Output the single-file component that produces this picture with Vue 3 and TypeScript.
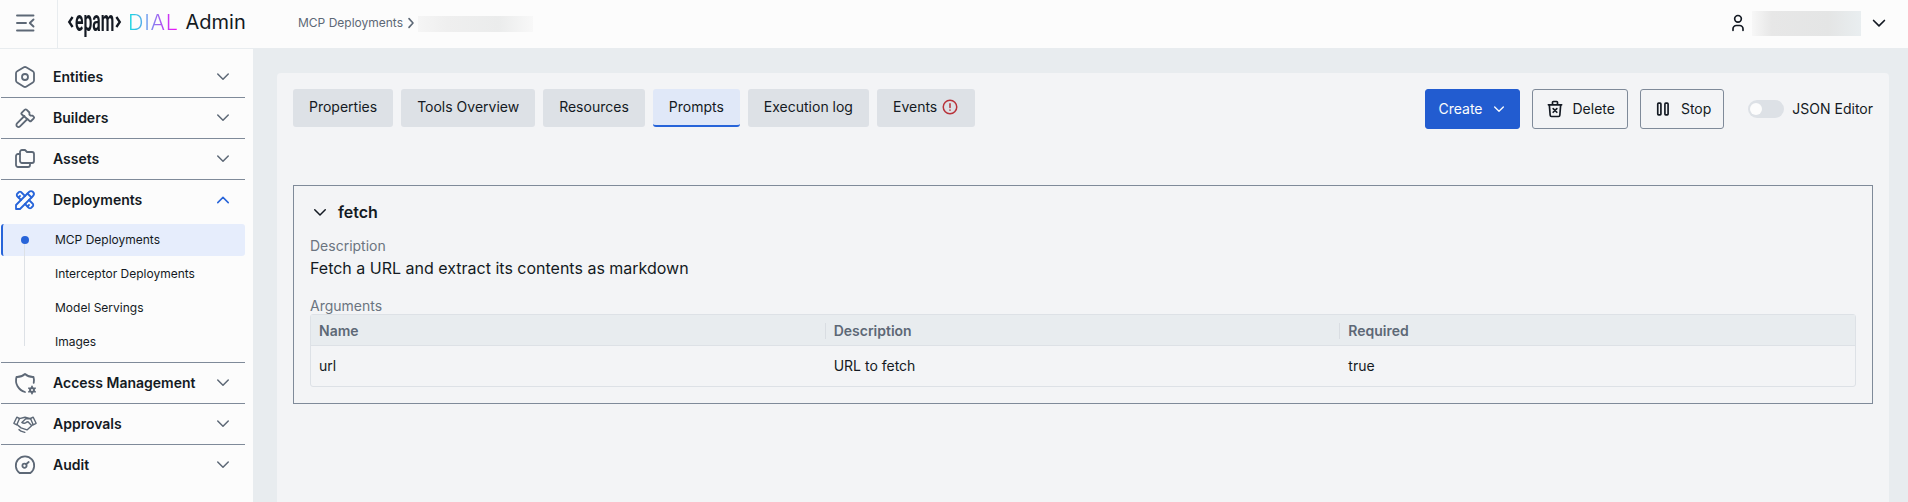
<script setup lang="ts">
interface NavItem {
  label: string
  icon: string[]
  open?: boolean
  children?: string[]
}

const nav: NavItem[] = [
  {
    label: 'Entities',
    icon: [
      'M19.875 6.27a2.225 2.225 0 0 1 1.125 1.948v7.284c0 .809 -.443 1.555 -1.158 1.948l-6.75 4.27a2.269 2.269 0 0 1 -2.184 0l-6.75 -4.27a2.225 2.225 0 0 1 -1.158 -1.948v-7.285c0 -.809 .443 -1.554 1.158 -1.947l6.75 -3.98a2.33 2.33 0 0 1 2.25 0l6.75 3.98z',
      'M12 9a3 3 0 1 0 0 6a3 3 0 1 0 0 -6',
    ],
  },
  {
    label: 'Builders',
    icon: [
      'M11.414 10l-7.383 7.418a2.091 2.091 0 0 0 0 2.967a2.11 2.11 0 0 0 2.976 0l7.407 -7.385',
      'M8.6 6.9l3 -3a1.6 1.6 0 0 1 2.2 0l2.6 2.6v2l1.2 1.2h2l1.2 1.2a1 1 0 0 1 0 1.4l-2.7 2.7a1 1 0 0 1 -1.4 0l-8.1 -6.7a1 1 0 0 1 0 -1.4z',
    ],
  },
  {
    label: 'Assets',
    icon: [
      'M9 3h3l2 2h5a2 2 0 0 1 2 2v7a2 2 0 0 1 -2 2h-10a2 2 0 0 1 -2 -2v-9a2 2 0 0 1 2 -2',
      'M17 16v2a2 2 0 0 1 -2 2h-10a2 2 0 0 1 -2 -2v-9a2 2 0 0 1 2 -2h2',
    ],
  },
  {
    label: 'Deployments',
    open: true,
    icon: [
      'M3 21h4l13 -13a1.5 1.5 0 0 0 -4 -4l-13 13v4',
      'M14.5 5.5l4 4',
      'M12 8l-4 -4a2 2 0 0 0 -2 0l-2 2a2 2 0 0 0 0 2l4 4',
      'M7 8l-1.5 1.5',
      'M16 12l4 4a2 2 0 0 1 0 2l-2 2a2 2 0 0 1 -2 0l-4 -4',
      'M16 17l-1.5 1.5',
    ],
    children: ['MCP Deployments', 'Interceptor Deployments', 'Model Servings', 'Images'],
  },
  {
    label: 'Access Management',
    icon: [
      'M12 21a12 12 0 0 1 -8.5 -15a12 12 0 0 0 8.5 -3a12 12 0 0 0 8.5 3c.568 1.933 .635 3.957 .223 5.89',
      'M19 17a2 2 0 1 0 0 4a2 2 0 1 0 0 -4',
      'M19 15.5v1.5M19 21v1.5M22.03 17.25l-1.3 .75M17.27 20l-1.3 .75M15.97 17.25l1.3 .75M20.73 20l1.3 .75',
    ],
  },
  {
    label: 'Approvals',
    icon: [
      'M3.8 5.2l2.7 1.3l-2.7 6.3l-2.9 -1.5z',
      'M20.2 5.2l-2.7 1.3l2.7 6.3l2.9 -1.5z',
      'M6.4 6.6l5.6 -1.4l5.6 1.4',
      'M4 12.5l4 3.4l6 2l6 -5.4',
      'M17.3 6.8h-4.5l-4 3.6c1.5 1.3 3.7 1.1 5 -.4l1.2 -.2l3.3 3.5',
      'M6 17.6l2 1.6l3.8 1.2',
    ],
  },
  {
    label: 'Audit',
    icon: [
      'M6.6 20a9.2 9.2 0 1 1 10.8 0z',
      'M11.5 10.6a2.1 2.1 0 1 0 0 4.2a2.1 2.1 0 1 0 0 -4.2',
      'M13.1 11.2l2.6 -2.2',
    ],
  },
]

const tabs = ['Properties', 'Tools Overview', 'Resources', 'Prompts', 'Execution log', 'Events']
const activeTab = 'Prompts'
const columns = ['Name', 'Description', 'Required']
const rows = [['url', 'URL to fetch', 'true']]
</script>

<template>
  <div class="app">
    <header class="header">
      <div class="burger">
        <svg width="24" height="24" viewBox="0 0 24 24" class="ico thick">
          <path d="M4 4.5h16.5M4 12h9M4 19.5h16.5M20.5 8.5l-3.7 3.5l3.7 3.5" />
        </svg>
      </div>
      <div class="brand">
        <svg class="bracket" width="7" height="14" viewBox="0 0 7 14"><path d="M5.6 2L2.2 7l3.4 5" /></svg>
        <span class="epam"><span class="epam-text">epam</span></span>
        <svg class="bracket" width="7" height="14" viewBox="0 0 7 14"><path d="M1.4 2L4.8 7l-3.4 5" /></svg>
        <span class="dial">DIAL</span>
        <span class="admin">Admin</span>
      </div>
      <div class="crumbs">
        <span>MCP Deployments</span>
        <svg width="16" height="16" viewBox="0 0 24 24" class="ico crumb-arrow"><path d="M9 5.5l6 6.5l-6 6.5" /></svg>
        <span class="redacted name"></span>
      </div>
      <div class="user">
        <svg width="20" height="20" viewBox="0 0 24 24" class="ico dark">
          <path d="M8 7a4 4 0 1 0 8 0a4 4 0 0 0 -8 0M6 21v-2a4 4 0 0 1 4 -4h4a4 4 0 0 1 4 4v2" />
        </svg>
        <span class="redacted account"></span>
        <svg width="20" height="20" viewBox="0 0 24 24" class="ico dark"><path d="M5.5 9l6.5 6.5l6.5 -6.5" /></svg>
      </div>
    </header>

    <div class="body">
      <nav class="sidebar">
        <section v-for="item in nav" :key="item.label" class="group" :class="{ open: item.open }">
          <div class="group-head">
            <svg width="24" height="24" viewBox="0 0 24 24" class="ico nav-ico" :class="{ fine: item.label === 'Approvals' }">
              <path v-for="d in item.icon" :key="d" :d="d" />
            </svg>
            <span class="group-label">{{ item.label }}</span>
            <svg width="18" height="18" viewBox="0 0 24 24" class="ico chevron">
              <path :d="item.open ? 'M5 15.5l7 -7l7 7' : 'M5 8l7 7l7 -7'" />
            </svg>
          </div>
          <ul v-if="item.children" class="children">
            <li v-for="(child, i) in item.children" :key="child" :class="{ current: i === 0 }">{{ child }}</li>
          </ul>
        </section>
      </nav>

      <main class="panel">
        <div class="toolbar">
          <div class="tabs">
            <button v-for="tab in tabs" :key="tab" class="tab" :class="{ active: tab === activeTab }">
              {{ tab }}
              <svg v-if="tab === 'Events'" width="18" height="18" viewBox="0 0 24 24" class="ico alert">
                <path d="M3 12a9 9 0 1 0 18 0a9 9 0 0 0 -18 0M12 7.5v5M12 16v.4" />
              </svg>
            </button>
          </div>
          <div class="actions">
            <button class="btn primary">
              Create
              <svg width="16" height="16" viewBox="0 0 24 24" class="ico"><path d="M5.5 9l6.5 6.5l6.5 -6.5" /></svg>
            </button>
            <button class="btn">
              <svg width="20" height="20" viewBox="0 0 24 24" class="ico dark">
                <path d="M4 7h16M5.2 7l1 12.5a1.6 1.6 0 0 0 1.6 1.5h8.4a1.6 1.6 0 0 0 1.6 -1.5l1 -12.5M9 7v-3a1 1 0 0 1 1 -1h4a1 1 0 0 1 1 1v3M9.8 11.5l4.4 4.4m0 -4.4l-4.4 4.4" />
              </svg>
              Delete
            </button>
            <button class="btn">
              <svg width="20" height="20" viewBox="0 0 24 24" class="ico dark">
                <rect x="5.7" y="5" width="3.8" height="14" rx="1" />
                <rect x="14.3" y="5" width="3.8" height="14" rx="1" />
              </svg>
              Stop
            </button>
            <div class="json">
              <span class="switch"><i></i></span>
              <span class="json-label">JSON Editor</span>
            </div>
          </div>
        </div>

        <article class="card">
          <div class="card-head">
            <svg width="18" height="18" viewBox="0 0 24 24" class="ico dark"><path d="M5 9l7 7l7 -7" /></svg>
            <h2>fetch</h2>
          </div>
          <div class="caption">Description</div>
          <p class="desc">Fetch a URL and extract its contents as markdown</p>
          <div class="caption args">Arguments</div>
          <div class="table">
            <div class="tr th">
              <div v-for="c in columns" :key="c" class="td">{{ c }}</div>
            </div>
            <div v-for="r in rows" :key="r[0]" class="tr">
              <div v-for="v in r" :key="v" class="td">{{ v }}</div>
            </div>
          </div>
        </article>
      </main>
    </div>
  </div>
</template>

<style>
body {
  overflow: hidden;
}
</style>

<style scoped>
* {
  box-sizing: border-box;
}
.app {
  height: 502px;
  display: flex;
  flex-direction: column;
  background: #e8ecef;
  color: #141a23;
  font-family: Inter, 'Liberation Sans', sans-serif;
  font-size: 14px;
  overflow: hidden;
}
.ico {
  fill: none;
  stroke: #5d6876;
  stroke-width: 1.5;
  stroke-linecap: round;
  stroke-linejoin: round;
  flex: none;
  display: block;
}
.ico.nav-ico {
  stroke-width: 1.8;
}
.ico.nav-ico.fine {
  stroke-width: 1.4;
}
.ico.chevron {
  stroke-width: 2;
}
.ico.thick {
  stroke-width: 1.9;
}
.ico.dark {
  stroke: #141a23;
  stroke-width: 2;
}
.header {
  height: 48px;
  flex: none;
  display: flex;
  align-items: center;
  background: #fcfcfc;
}
.burger {
  width: 58px;
  height: 48px;
  border-right: 1px solid #e8ecef;
  display: flex;
  align-items: center;
  padding: 0 0 2px 13px;
}
.brand {
  width: 240px;
  display: flex;
  align-items: center;
  height: 48px;
  padding-left: 9px;
}
.epam {
  flex: none;
  width: 41px;
  height: 36px;
  margin-top: -6px;
  padding-left: 1px;
}
.epam-text {
  display: block;
  width: 76px;
  line-height: 36px;
  font-family: Roboto, sans-serif;
  font-size: 29px;
  font-weight: 700;
  transform: scaleX(0.54);
  transform-origin: 0 0;
}
.bracket {
  flex: none;
  display: block;
  margin-top: -5px;
  fill: none;
  stroke: #141a23;
  stroke-width: 2.3;
}
.dial {
  margin-left: 6px;
  font-size: 21.5px;
  line-height: 28px;
  font-weight: 300;
  letter-spacing: 0.7px;
  margin-top: -5px;
  background: linear-gradient(90deg, #0fdde0, #7f8cf0 45%, #a35cf0 62%, #fb05f8);
  background-clip: text;
  -webkit-background-clip: text;
  color: transparent;
}
.admin {
  margin-left: 7px;
  font-size: 20px;
  line-height: 28px;
  margin-top: -5px;
}
.crumbs {
  display: flex;
  align-items: center;
  font-size: 12px;
  color: #5d6876;
  margin-top: -3px;
}
.crumb-arrow {
  stroke-width: 2.4;
  margin-right: -1px;
}
.redacted {
  display: block;
}
.redacted.name {
  width: 115px;
  height: 16px;
  margin: 3px 0 0;
  background: linear-gradient(90deg, #f5f5f5, #efefef 25%, #ebecec 70%, #f8f8f8);
}
.user {
  margin-left: auto;
  display: flex;
  align-items: center;
  padding-right: 19px;
  margin-top: -3px;
}
.redacted.account {
  width: 109px;
  height: 25px;
  margin: 2px 8px 0 4px;
  background: linear-gradient(90deg, #f7f7f7, #e7e7e7 18%, #e4e5e5 70%, #e9eef0);
}
.body {
  flex: 1;
  display: flex;
  min-height: 0;
}
.sidebar {
  width: 253px;
  flex: none;
  background: #fcfcfc;
  border-top: 1px solid #e8ecef;
  padding: 8px 8px 0 1px;
}
.group {
  border-bottom: 1px solid #7f8a99;
}
.group:last-child {
  border-bottom: 0;
}
.group-head {
  height: 40px;
  display: flex;
  align-items: center;
  padding: 0 13px 0 12px;
}
.group-label {
  margin-left: 16px;
  flex: 1;
  font-weight: 600;
  white-space: nowrap;
  padding-bottom: 2px;
}
.open .group-head .ico {
  stroke: #2764d9;
}
.children {
  list-style: none;
  margin: 4px 0;
  padding: 0;
  display: flex;
  flex-direction: column;
  gap: 2px;
  position: relative;
}
.children::before {
  content: '';
  position: absolute;
  left: 23px;
  top: 16px;
  bottom: 12px;
  width: 1px;
  background: #dde1e6;
  z-index: 1;
}
.children li {
  height: 32px;
  display: flex;
  align-items: center;
  padding: 0 0 2px 54px;
  font-size: 12px;
  border-radius: 3px;
}
.children li.current {
  background: #e6edfc;
  border-left: 2px solid #2764d9;
  padding-left: 52px;
  position: relative;
}
.children li.current::before {
  content: '';
  position: absolute;
  left: 18px;
  top: 12px;
  width: 8px;
  height: 8px;
  border-radius: 50%;
  background: #2764d9;
  z-index: 2;
}
.panel {
  flex: 1;
  margin: 25px 19px 0 24px;
  padding: 16px;
  background: #f3f4f6;
  border-radius: 4px 4px 0 0;
}
.toolbar {
  display: flex;
  justify-content: space-between;
  align-items: flex-start;
}
.tabs {
  display: flex;
  gap: 8px;
}
button {
  font: inherit;
  color: inherit;
  border: 0;
  margin: 0;
}
.tab {
  height: 38px;
  padding: 0 16px 3px;
  display: flex;
  align-items: center;
  gap: 4px;
  white-space: nowrap;
  background: #dde1e6;
  border-radius: 3px;
}
.tab.active {
  background: #e0e8f8;
  border-bottom: 2px solid #2764d9;
  padding-bottom: 1px;
}
.ico.alert {
  stroke: #b8323a;
  stroke-width: 2;
}
.actions {
  display: flex;
  gap: 12px;
}
.btn {
  height: 40px;
  display: flex;
  align-items: center;
  gap: 8px;
  padding: 0 12px 1px;
  border: 1px solid #7f8a99;
  border-radius: 3px;
  background: transparent;
}
.btn.primary {
  background: #225cd0;
  border-color: #225cd0;
  color: #fcfcfc;
}
.primary .ico {
  stroke: #fcfcfc;
  stroke-width: 2;
}
.json {
  display: flex;
  align-items: center;
  gap: 8px;
  margin-left: 12px;
}
.json-label {
  padding-bottom: 1px;
}
.switch {
  width: 36px;
  height: 18px;
  border-radius: 9px;
  background: #dde1e6;
  padding: 3px 2px;
}
.switch i {
  display: block;
  width: 12px;
  height: 12px;
  border-radius: 50%;
  background: #fcfcfc;
}
.card {
  margin-top: 56px;
  height: 219px;
  border: 1px solid #7f8a99;
  padding: 16px;
}
.card-head {
  display: flex;
  align-items: center;
  gap: 9px;
  height: 20px;
  padding-left: 1px;
}
.card-head h2 {
  margin: 0;
  font-size: 16px;
  line-height: 20px;
  font-weight: 600;
}
.caption {
  color: #6b7480;
  line-height: 18px;
  margin-top: 15px;
}
.desc {
  margin: 2px 0 0;
  font-size: 16px;
  line-height: 22px;
}
.caption.args {
  margin-top: 19px;
  line-height: 16px;
}
.table {
  border: 1px solid #dde1e6;
  border-radius: 3px;
}
.tr {
  display: grid;
  grid-template-columns: repeat(3, 1fr);
  height: 40px;
  align-items: center;
  padding-bottom: 1px;
}
.tr.th {
  height: 31px;
  padding: 1px 0 0;
  background: #e8ecef;
  border-bottom: 1px solid #dde1e6;
  color: #5d6876;
  font-weight: 600;
}
.td {
  padding-left: 8px;
}
.th .td {
  line-height: 16px;
}
.th .td + .td {
  box-shadow: -1px 0 0 #d9dde2;
}
</style>
